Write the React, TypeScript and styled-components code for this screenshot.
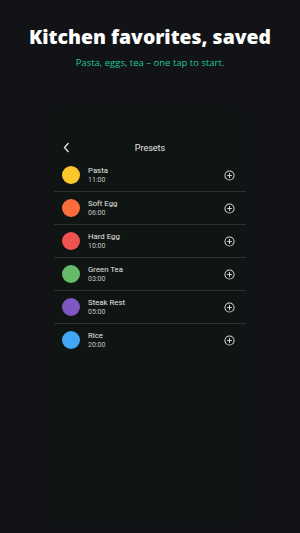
import React from "react";
import styled, { createGlobalStyle } from "styled-components";

const Global = createGlobalStyle`
  html, body { margin: 0; padding: 0; background: #121317; }
  body { width: 300px; height: 533px; overflow: hidden; -webkit-font-smoothing: antialiased; }
`;

const Page = styled.div`
  width: 300px;
  height: 533px;
  background: #121317;
  display: flex;
  flex-direction: column;
  align-items: center;
  font-family: Roboto, "Noto Sans", sans-serif;
`;

const Title = styled.h1`
  margin: 25px 0 0;
  font-family: "Open Sans", Lato, sans-serif;
  font-weight: 800;
  font-size: 19.4px;
  line-height: 24px;
  color: #ffffff;
`;

const Subtitle = styled.p`
  margin: 8px 0 0;
  font-family: "Open Sans", sans-serif;
  font-size: 9.5px;
  line-height: 12px;
  color: #22c59c;
`;

const Phone = styled.div`
  margin-top: 39px;
  width: 192px;
  height: 415px;
  background: #0f1513;
  border-radius: 12px;
  display: flex;
  flex-direction: column;
  overflow: hidden;
`;

const Header = styled.div`
  margin-top: 29px;
  height: 22px;
  display: flex;
  align-items: center;
  justify-content: center;
  position: relative;
  color: #e4e4e4;
  font-size: 9px;
`;

const Back = styled.div`
  position: absolute;
  left: 9px;
  top: 5px;
  display: flex;
`;

const List = styled.div`
  display: flex;
  flex-direction: column;
`;

const Row = styled.div<{ $last?: boolean }>`
  height: 32px;
  display: flex;
  align-items: center;
  padding: 0 11px 0 8px;
  border-bottom: 1px solid ${(p) => (p.$last ? "transparent" : "#2a302d")};
  gap: 8px;
`;

const Dot = styled.div<{ $c: string }>`
  width: 18px;
  height: 18px;
  border-radius: 50%;
  background: ${(p) => p.$c};
  flex: none;
`;

const Info = styled.div`
  flex: 1;
  display: flex;
  flex-direction: column;
  gap: 1px;
`;

const Name = styled.div`
  font-size: 7.8px;
  line-height: 9px;
  color: #e6e6e6;
`;

const Time = styled.div`
  font-size: 7px;
  line-height: 9px;
  color: #c4c4c4;
`;

const items = [
  { name: "Pasta", time: "11:00", color: "#fcc72c" },
  { name: "Soft Egg", time: "06:00", color: "#fb6d3a" },
  { name: "Hard Egg", time: "10:00", color: "#ef5350" },
  { name: "Green Tea", time: "03:00", color: "#66bb6a" },
  { name: "Steak Rest", time: "05:00", color: "#7e57c2" },
  { name: "Rice", time: "20:00", color: "#42a5f5" },
];

const PlusIcon = () => (
  <svg width="11" height="11" viewBox="0 0 12 12" fill="none" stroke="#d0d0d0" strokeWidth="1.1">
    <circle cx="6" cy="6" r="5" />
    <path d="M6 3.4v5.2M3.4 6h5.2" />
  </svg>
);

export default function App() {
  return (
    <Page>
      <Global />
      <Title>Kitchen favorites, saved</Title>
      <Subtitle>Pasta, eggs, tea – one tap to start.</Subtitle>
      <Phone>
        <Header>
          <Back>
            <svg width="7" height="11" viewBox="0 0 7 11" fill="none" stroke="#e6e6e6" strokeWidth="1.3">
              <path d="M5.5 1L1.5 5.5l4 4.5" />
            </svg>
          </Back>
          Presets
        </Header>
        <List>
          {items.map((it, i) => (
            <Row key={it.name} $last={i === items.length - 1}>
              <Dot $c={it.color} />
              <Info>
                <Name>{it.name}</Name>
                <Time>{it.time}</Time>
              </Info>
              <PlusIcon />
            </Row>
          ))}
        </List>
      </Phone>
    </Page>
  );
}
